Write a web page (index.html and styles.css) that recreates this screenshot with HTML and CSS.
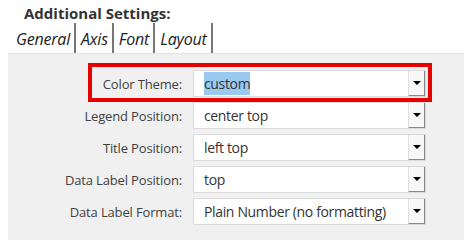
FILE: index.html
```html
<!DOCTYPE html>
<html lang="en">
<head>
    <meta charset="UTF-8">
    <title>Additional Settings</title>
    <link rel="stylesheet" href="styles.css">
</head>
<body>
    <div class="heading">Additional Settings:</div>

    <!-- tab strip -->
    <div class="tabs">
        <div class="tab active">General</div>
        <div class="tab">Axis</div>
        <div class="tab">Font</div>
        <div class="tab">Layout</div>
    </div>

    <div class="panel">
        <div class="row highlighted">
            <div class="label">Color Theme:</div>
            <div class="select">
                <div class="value"><span class="selected-text">custom</span></div>
                <div class="drop"><span class="arrow"></span></div>
            </div>
        </div>
        <div class="row">
            <div class="label">Legend Position:</div>
            <div class="select">
                <div class="value">center top</div>
                <div class="drop"><span class="arrow"></span></div>
            </div>
        </div>
        <div class="row">
            <div class="label">Title Position:</div>
            <div class="select">
                <div class="value">left top</div>
                <div class="drop"><span class="arrow"></span></div>
            </div>
        </div>
        <div class="row">
            <div class="label">Data Label Position:</div>
            <div class="select">
                <div class="value">top</div>
                <div class="drop"><span class="arrow"></span></div>
            </div>
        </div>
        <div class="row">
            <div class="label">Data Label Format:</div>
            <div class="select">
                <div class="value">Plain Number (no formatting)</div>
                <div class="drop"><span class="arrow"></span></div>
            </div>
        </div>
    </div>
</body>
</html>
```

FILE: styles.css
```css
body {
    margin: 0;
    background-color: #fff;
    font-family: "Open Sans", "Noto Sans", sans-serif;
    color: #333;
    height: 240px;
    display: flex;
    flex-direction: column;
    overflow: hidden;
}

.heading {
    padding-left: 24px;
    height: 23px;
    line-height: 26px;
    font-size: 15px;
    font-weight: bold;
    color: #333;
}

.tabs {
    display: flex;
    margin-left: 8px;
    height: 30px;
}

.tab {
    padding: 2px 4px 0 5px;
    font-size: 16px;
    font-style: italic;
    line-height: 28px;
    letter-spacing: -0.2px;
    color: #222;
    border-right: 2px solid #777;
}

.tab.active {
    padding-left: 8px;
}

/* gray settings area */
.panel {
    flex: 1;
    margin-left: 8px;
    background-color: #f0f0f0;
    border-top: 1px solid #e4e4e4;
    padding-top: 16px;
}

.row {
    position: relative;
    display: flex;
    align-items: center;
    height: 27px;
    margin-bottom: 5px;
}

.label {
    width: 174px;
    text-align: right;
    font-size: 13px;
    letter-spacing: -0.15px;
    color: #3f3f3f;
}

.select {
    display: flex;
    margin-left: 11px;
    width: 233px;
    height: 27px;
    box-sizing: border-box;
    border: 1px solid #dadada;
    background-color: #fff;
}

.value {
    flex: 1;
    padding-left: 10px;
    font-size: 14px;
    letter-spacing: -0.35px;
    line-height: 25px;
    color: #333;
}

.selected-text {
    background-color: #99c9ef;
    padding: 2px 0;
}

.drop {
    width: 17px;
    box-sizing: border-box;
    border-left: 1px solid #e0e0e0;
    border-right: 1px solid #888;
    border-bottom: 1px solid #888;
    background-color: #f7f7f7;
    display: flex;
    align-items: center;
    justify-content: center;
}

.arrow {
    width: 0;
    height: 0;
    border-left: 4px solid transparent;
    border-right: 4px solid transparent;
    border-top: 4px solid #000;
}

/* red call-out round the first row */
.highlighted::after {
    content: "";
    position: absolute;
    left: 80px;
    top: -7px;
    width: 336px;
    height: 31px;
    border: 4px solid #e60000;
}
```
